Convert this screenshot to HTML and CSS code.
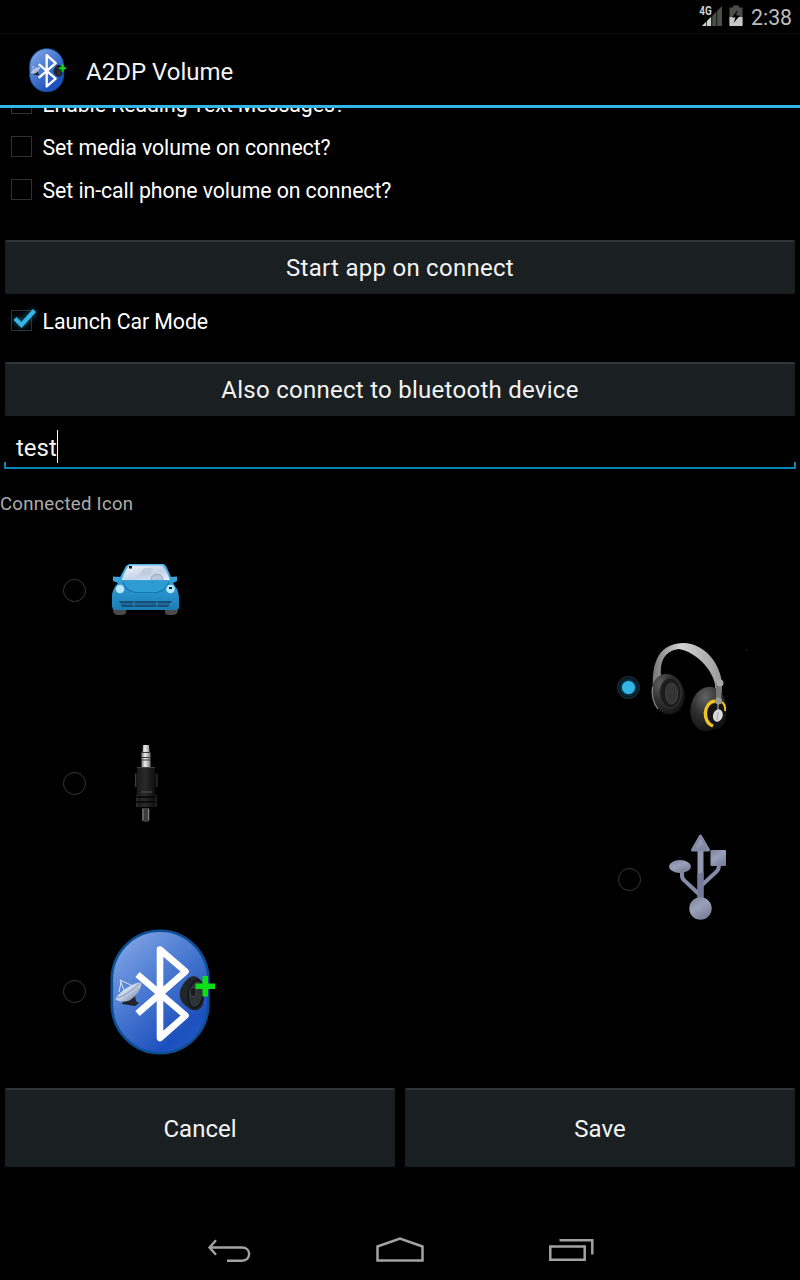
FILE: index.html
```
<!DOCTYPE html>
<html lang="en">
<head>
<meta charset="utf-8">
<title>A2DP Volume</title>
<link rel="stylesheet" href="styles.css">
</head>
<body>
<svg class="defs" width="0" height="0" aria-hidden="true">
  <defs>
    <linearGradient id="blue" x1="0.1" y1="0" x2="0.8" y2="1">
      <stop offset="0" stop-color="#88a9e6"/><stop offset="0.35" stop-color="#5583d6"/><stop offset="0.85" stop-color="#1c50bd"/><stop offset="1" stop-color="#2459c4"/>
    </linearGradient>
    <linearGradient id="dish" x1="0" y1="0" x2="1" y2="1">
      <stop offset="0" stop-color="#ffffff"/><stop offset="0.5" stop-color="#c3d2e8"/><stop offset="1" stop-color="#5c6c88"/>
    </linearGradient>
    <symbol id="bluetooth" viewBox="110 929 106 126">
      <rect x="111.800" y="930.800" width="96.500" height="122.500" rx="48.200" ry="49" fill="url(#blue)" stroke="#0d4f94" stroke-width="2.600"/>
      <path d="M137.500 974.500L185.500 1015.500L160 1038V949.500L185.500 971.500L137.500 1013.500" fill="none" stroke="#fff" stroke-width="6.600" stroke-linejoin="round"/>
      <path d="M128 998L135 996L136 1001L139 1003L135 1006L122 1004L123 1001L129 1001Z" fill="#20242c"/>
      <path d="M115.500 999C119 1003 128 1003 134 997C140 991 142 986 141 982C134 983 120 990 115.500 999Z" fill="url(#dish)"/>
      <path d="M117 998Q126 996 141 982" stroke="#6d82a5" stroke-width="0.800" fill="none"/>
      <path d="M120 980L124 990M120 980L133 986M121 982L119 992" stroke="#dfe7f2" stroke-width="1" fill="none"/>
      <path d="M180 991C184 980 191 974 197 977C204 981 206 995 203 1004C200 1012 192 1012 186 1006Q178 1000 180 991Z" fill="#202528"/>
      <ellipse cx="196" cy="994" rx="7.500" ry="14" transform="rotate(10 196 994)" fill="#2c3236" stroke="#101416" stroke-width="1.500"/>
      <ellipse cx="193" cy="992" rx="3" ry="4.500" fill="#15191b" stroke="#464d52" stroke-width="1"/>
      <path d="M202.500 976H208V983.500H215V989H208V996.500H202.500V989H195.500V983.500H202.500Z" fill="#0be017"/>
    </symbol>
  </defs>
</svg>

<div class="status">
  <svg width="46" height="24" viewBox="698 4 46 24">
    <path d="M722 6V26H702Z" fill="#4b4d4b"/>
    <path d="M711 17V26H702Z" fill="#d0d0d0"/>
    <path d="M706.500 17V26M711.800 10V26M716.700 8V26" stroke="#000" stroke-width="0.700"/>
    <rect x="698" y="5" width="13.500" height="11" fill="#000"/>
    <text x="699.300" y="15" class="net" textLength="12.500" lengthAdjust="spacingAndGlyphs">4G</text>
    <path d="M733 5.500H739V7.500H742.500V26H729.500V7.500H733Z" fill="#4b4d4b"/>
    <path d="M729.500 17H742.500V26H729.500Z" fill="#c8c8c8"/>
    <path d="M737.500 10L732 17.500H735.500L733.500 23L740 15.500H736.200Z" fill="#000"/>
  </svg>
  <span class="time">2:38</span>
</div>

<header class="bar">
  <svg class="logo" width="37.500" height="44.500" viewBox="110 929 106 126" preserveAspectRatio="none"><use href="#bluetooth" x="110" y="929" width="106" height="126"/></svg>
  <h1 class="title">A2DP Volume</h1>
</header>

<main class="content">
  <div class="checks">
    <label class="check"><span class="box"></span><span>Enable Reading Text Messages?</span></label>
    <label class="check"><span class="box"></span><span>Set media volume on connect?</span></label>
    <label class="check"><span class="box"></span><span>Set in-call phone volume on connect?</span></label>
  </div>
  <button class="btn wide first">Start app on connect</button>
  <label class="check car-mode"><span class="box"><svg class="tick" width="32" height="26" viewBox="8 304 32 26"><path d="M15 318.500L21.500 325L34.500 310.500" fill="none" stroke="#33b5e5" stroke-width="4.200"/></svg></span><span>Launch Car Mode</span></label>
  <button class="btn wide second">Also connect to bluetooth device</button>
  <div class="field"><span class="value">test</span><span class="caret"></span></div>
  <p class="label">Connected Icon</p>

  <div class="icons">
    <div class="option car">
      <span class="radio"></span>
      <svg width="72" height="56" viewBox="110 562 72 56">
        <defs>
          <linearGradient id="body" x1="0" y1="0" x2="0" y2="1"><stop offset="0" stop-color="#52b6e6"/><stop offset="0.5" stop-color="#2c98d2"/><stop offset="1" stop-color="#1c7db5"/></linearGradient>
          <linearGradient id="glass" x1="0" y1="0" x2="1" y2="1"><stop offset="0" stop-color="#f3f6fb"/><stop offset="0.6" stop-color="#c4d3e8"/><stop offset="1" stop-color="#e6effa"/></linearGradient>
        </defs>
        <path d="M113 606H126V613Q125 615 122 615H117Q113 614 113 610ZM165 606H178V610Q178 614 174 615H169Q165 615 165 612Z" fill="#4a4a4c"/>
        <path d="M129 564H163Q165 564 167 568L171 577L177 576.500V581L173 583L177 589Q179 593 179 600V607Q179 610 175 610H116Q112 610 112 606V595Q113 588 118 583L113 581V576.500L120 577L126 566Z" fill="url(#body)"/>
        <path d="M130 565.500H162Q165 567 170 580H121.500Q127 566 130 565.500Z" fill="url(#glass)"/>
        <path d="M144 568H153L150 575L138 576Z" fill="#c3cde0"/>
        <path d="M151 580Q151 574.500 157 574.500T163 580" fill="#b9c6dc" stroke="#93a6c2" stroke-width="1"/>
        <path d="M121 581H170Q167 591 157 592H135Q124 591 121 581Z" fill="#2c9cd3"/>
        <path d="M123 582Q125 591 136 592.500H156Q166 591 169 582" fill="none" stroke="#1979ae" stroke-width="1.200"/>
        <circle cx="120" cy="589" r="4.300" fill="#b8e8fb"/><circle cx="170.500" cy="589" r="4.300" fill="#b8e8fb"/>
        <path d="M129 566H132V568.500H129ZM169 587H172V589H169Z" fill="#101820"/>
        <path d="M119 601H172L168 607H122Z" fill="#164e78"/>
        <path d="M120 604H171M134 601V607M157 601V607" stroke="#2b86ba" stroke-width="1"/>
      </svg>
    </div>
    <div class="option phones">
      <span class="radio on"></span>
      <svg width="98" height="92" viewBox="650 641 98 92">
        <defs>
          <linearGradient id="band" x1="0" y1="0" x2="1" y2="0"><stop offset="0" stop-color="#757575"/><stop offset="0.4" stop-color="#d4d4d4"/><stop offset="1" stop-color="#9a9a9a"/></linearGradient>
          <radialGradient id="cup" cx="0.35" cy="0.25" r="0.8"><stop offset="0" stop-color="#626262"/><stop offset="0.5" stop-color="#2f2f2f"/><stop offset="1" stop-color="#121212"/></radialGradient>
        </defs>
        <path d="M653 690C652 670 654 644 683 643C706 643 721 666 722 684L721 705L716 704L715 684C712 669 696 652 679 649C665 651 660 660 661 676Z" fill="url(#band)"/>
        <ellipse cx="668" cy="694" rx="16.300" ry="20.500" transform="rotate(-12 668 694)" fill="url(#cup)"/>
        <path d="M652.500 687Q651 700 658 709" fill="none" stroke="#858585" stroke-width="1.200"/>
        <ellipse cx="670.500" cy="693" rx="10.500" ry="15" fill="#1b1b1b" stroke="#303030" stroke-width="1.500"/>
        <ellipse cx="671.500" cy="693.500" rx="6" ry="10.500" fill="#343434" stroke="#444" stroke-width="1"/>
        <ellipse cx="708" cy="709" rx="17.500" ry="22.500" transform="rotate(12 708 709)" fill="url(#cup)"/>
        <ellipse cx="716" cy="714" rx="10.500" ry="15" fill="#131313"/>
        <path d="M715 701C703 703 702 722 713 726" fill="none" stroke="#edc51b" stroke-width="3.400"/>
        <path d="M722 702Q726 706 725 711" fill="none" stroke="#edc51b" stroke-width="2"/>
        <path d="M716 682H722L721 702H716Z" fill="#777"/><path d="M718 702V713" stroke="#888" stroke-width="1.500"/>
        <circle cx="720" cy="683" r="3.500" fill="#a8a8a8"/><circle cx="718.500" cy="701" r="3.500" fill="#999"/>
        <ellipse cx="718" cy="715.500" rx="4.800" ry="6.300" transform="rotate(18 718 715)" fill="#d9d9d9"/>
        <path d="M718 712L717 720" stroke="#999" stroke-width="0.800"/>
        <rect x="746" y="649" width="1" height="2" fill="#222"/>
      </svg>
    </div>
    <div class="option jack">
      <span class="radio"></span>
      <svg width="26" height="82" viewBox="133 743 26 82">
        <defs>
          <linearGradient id="metal" x1="0" y1="0" x2="1" y2="0"><stop offset="0" stop-color="#777"/><stop offset="0.4" stop-color="#f2f2f2"/><stop offset="1" stop-color="#777"/></linearGradient>
          <linearGradient id="rubber" x1="0" y1="0" x2="1" y2="0"><stop offset="0" stop-color="#161616"/><stop offset="0.45" stop-color="#292929"/><stop offset="1" stop-color="#0b0b0b"/></linearGradient>
        </defs>
        <path d="M143 745H149L149.500 752H150.500V767H141.500V752H142.500Z" fill="url(#metal)"/>
        <path d="M141 752.500H151M141.500 757.500H150.500M141.500 760H150.500" stroke="#383838" stroke-width="1.200"/>
        <path d="M137 767H155V773H157V787H155L156 807H136L137 787H135V773H137Z" fill="url(#rubber)"/>
        <path d="M137 767.500H155M135.500 774V787M157 774V787M137 795V807M156 795V807" stroke="#4a4a4a" stroke-width="0.800"/>
        <path d="M141 792H152" stroke="#3c3c3c" stroke-width="2"/>
        <path d="M136 797H156M136 802H156" stroke="#050505" stroke-width="1.500"/>
        <path d="M142 808H149.500V821Q146 823 142 821Z" fill="#3c3c3c"/>
        <path d="M143 809V820M148.500 809V820" stroke="#858585" stroke-width="1"/>
      </svg>
    </div>
    <div class="option usb">
      <span class="radio"></span>
      <svg width="60" height="88" viewBox="668 833 60 88">
        <defs><linearGradient id="steel" x1="0" y1="0" x2="0.600" y2="1"><stop offset="0" stop-color="#7d829d"/><stop offset="0.5" stop-color="#9a9fba"/><stop offset="1" stop-color="#7b809b"/></linearGradient></defs>
        <path d="M682 870V876Q682 879 686 882L700 895M719 864Q719 870 716 872L702 885" fill="none" stroke="#858aa8" stroke-width="4"/>
        <path d="M697.500 849H703.500V900H697.500Z" fill="#9297b2"/><path d="M697.500 874L703.500 872V898H697.500Z" fill="#747998"/>
        <path d="M700.500 836L708.500 850H692.500Z" fill="url(#steel)" stroke="#8489a5" stroke-width="3" stroke-linejoin="round"/>
        <ellipse cx="680" cy="866.500" rx="11" ry="6.500" fill="url(#steel)"/>
        <rect x="710.500" y="850" width="15.500" height="16" rx="1" fill="url(#steel)"/>
        <circle cx="700.500" cy="908.500" r="11.200" fill="url(#steel)"/>
      </svg>
    </div>
    <div class="option bt">
      <span class="radio"></span>
      <svg width="106" height="126"><use href="#bluetooth" width="106" height="126"/></svg>
    </div>
  </div>

  <div class="actions"><button class="btn">Cancel</button><button class="btn">Save</button></div>
</main>

<nav class="nav">
  <svg width="44" height="26" viewBox="208 1236 44 26"><path d="M211 1246.500H243C252.500 1246.500 252.500 1259.700 243 1259.700H228M217 1239.200L210.500 1246.500L217 1253.800" fill="none" stroke="#a2a2a2" stroke-width="2.400"/></svg>
  <svg width="50" height="28" viewBox="375 1235 50 28"><path d="M377.500 1259.500V1245.500L400 1237.500L422.500 1245.500V1259.500Z" fill="none" stroke="#a2a2a2" stroke-width="2.500"/></svg>
  <svg width="46" height="26" viewBox="548 1237 46 26"><path d="M550.300 1246.500H584.700V1259.700H550.300ZM559.500 1240.200H592.300V1254.500" fill="none" stroke="#a2a2a2" stroke-width="2.500"/></svg>
</nav>
</body>
</html>
```
FILE: styles.css
```
* { box-sizing: border-box; }
body {
  margin: 0;
  width: 800px;
  height: 1280px;
  overflow: hidden;
  display: flex;
  flex-direction: column;
  background: #000;
  color: #f3f3f3;
  font-family: Roboto, "Noto Sans", sans-serif;
}
svg { display: block; flex: none; }
.defs { position: absolute; }

.status {
  flex: none;
  height: 34px;
  padding: 4px 8px 0 698px;
  display: flex;
  border-bottom: 1px solid #0c0c0c;
}
.net { font: bold 13px Roboto, sans-serif; fill: #cfcfcf; }
.time { margin-left: 7px; font-size: 21.3px; line-height: 28px; color: #bebebe; white-space: nowrap; }

.bar {
  flex: none;
  height: 74px;
  display: flex;
  align-items: center;
  padding-left: 29px;
  border-bottom: 3px solid #33b5e5;
}
.logo { margin-top: 1px; }
.title { margin: 4px 0 0 19.5px; font-size: 24px; font-weight: 400; line-height: 32px; }

.content { flex: none; height: 1108px; overflow: hidden; }
.checks { margin-top: -26px; }
.check {
  height: 43px;
  display: flex;
  align-items: center;
  padding-left: 10.5px;
  font-size: 21.3px;
  line-height: 26px;
  letter-spacing: -0.075px;
  color: #fff;
  white-space: nowrap;
}
.check > span:last-child { margin: 2px 0 0 10.5px; }
.box { flex: none; width: 21.5px; height: 21.5px; border: 1px solid #303232; }
.tick { margin: -7px 0 0 -3.5px; filter: drop-shadow(0 0 3px #1a7195); }

.btn {
  display: block;
  padding: 0;
  border: 0;
  border-top: 2px solid #303638;
  border-radius: 2px;
  background: #1a2022;
  color: #f3f3f3;
  font-family: inherit;
  font-size: 24px;
  text-align: center;
}
.wide { width: 790px; height: 54px; margin: 0 5px; letter-spacing: 0.27px; }
.first { margin-top: 29px; }
.car-mode { margin-top: 5px; }
.second { margin-top: 20px; }

.field {
  height: 40px;
  margin: 13px 4px 0;
  display: flex;
  padding-left: 12px;
  font-size: 24px;
  line-height: 38px;
  border-bottom: 2px solid #0b83b5;
  background:
    linear-gradient(#0b83b5, #0b83b5) left bottom / 2px 5px no-repeat,
    linear-gradient(#0b83b5, #0b83b5) right bottom / 2px 5px no-repeat;
}
.caret { width: 1px; height: 33px; margin-top: 1px; background: #fff; }
.label { height: 26px; margin: 21px 0 0; font-size: 18.6px; line-height: 28px; letter-spacing: 0.27px; color: #acacac; }

.icons { height: 572px; display: flex; flex-direction: column; }
.option { display: flex; align-items: center; padding-left: 63px; }
.radio { flex: none; width: 23px; height: 23px; border: 1px solid #383838; border-radius: 50%; }
.radio.on {
  border-color: #26383f;
  background: radial-gradient(circle, #33b5e5 0 6px, #093447 7px, #04151d 10px);
}
.car { height: 56px; margin-top: 46px; gap: 24px; }
.phones { height: 92px; margin-top: 23px; padding-left: 617px; gap: 10px; }
.jack { height: 82px; margin-top: 10px; gap: 47px; }
.jack .radio, .bt .radio { margin-bottom: 2px; }
.usb { height: 88px; margin-top: 8px; padding-left: 618px; gap: 27px; }
.usb .radio { margin-top: 4px; }
.bt { height: 126px; margin-top: 8px; gap: 24px; }

.actions { display: grid; grid-template-columns: 1fr 1fr; gap: 10px; padding: 0 5px; }
.actions .btn { height: 79px; }

.nav {
  flex: none;
  height: 64px;
  display: flex;
  justify-content: space-between;
  align-items: center;
  padding: 4px 206px 0 207px;
}
```
